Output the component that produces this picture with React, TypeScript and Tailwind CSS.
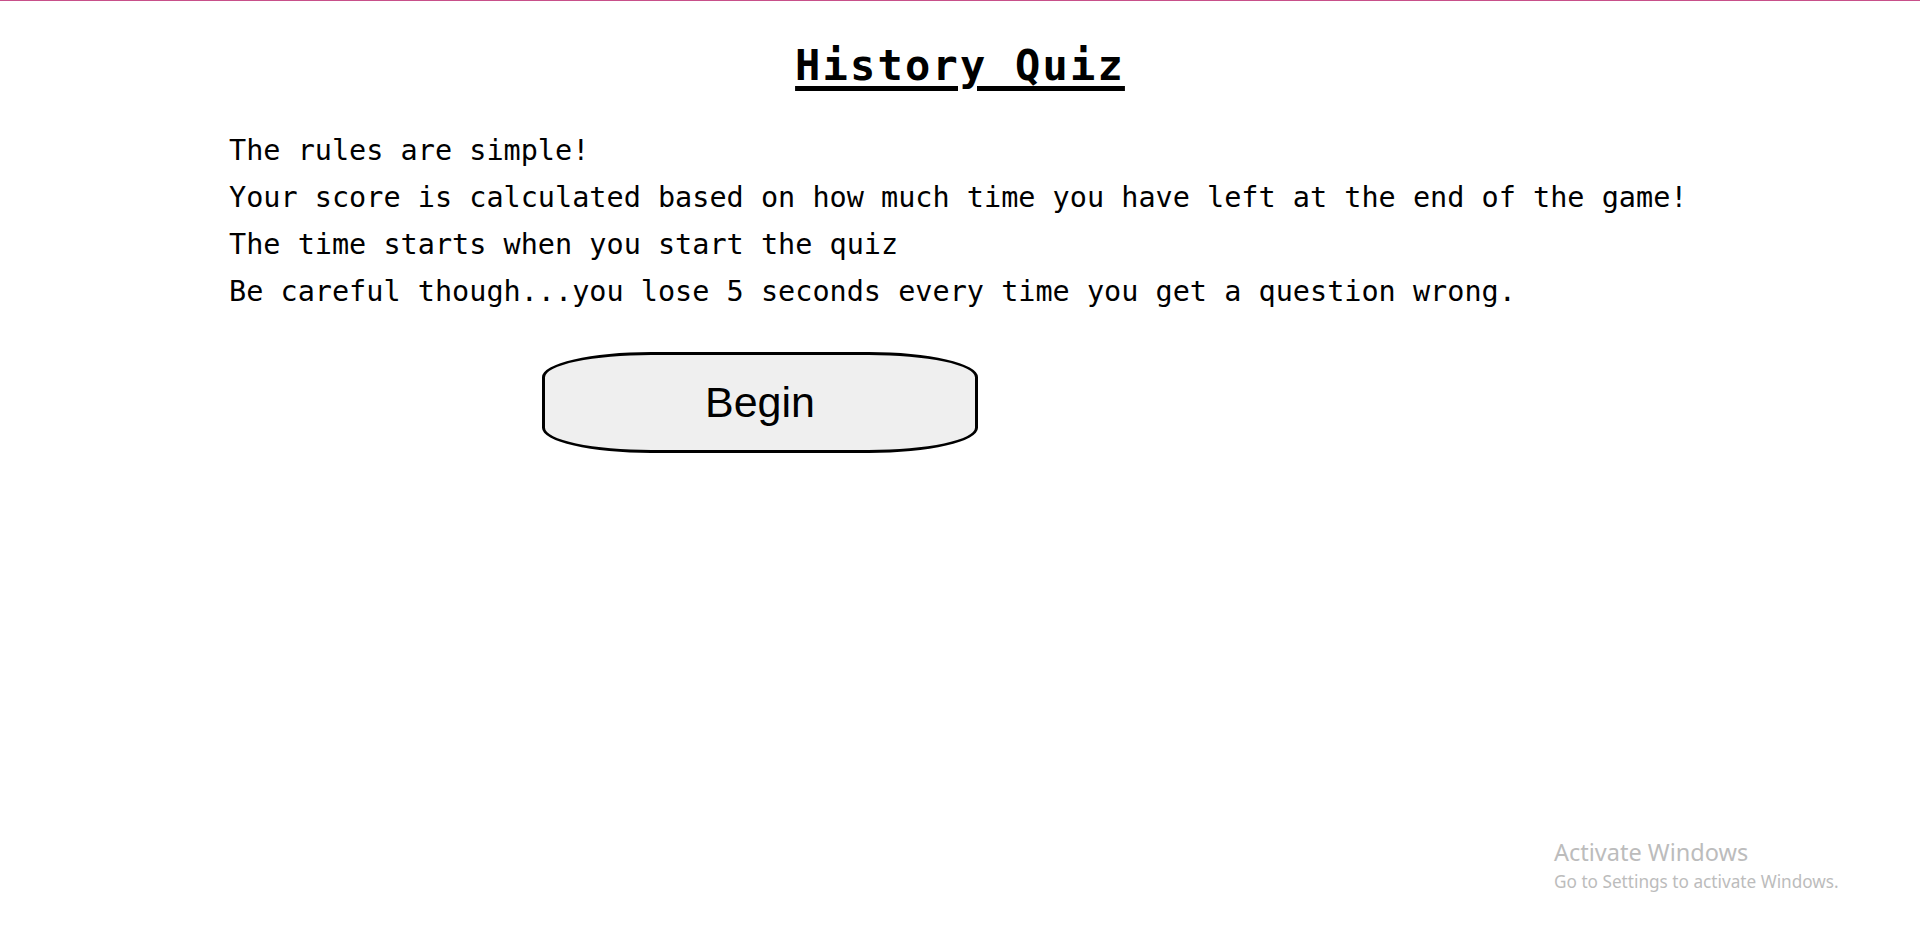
export default function App() {
  const lines = [
    "The rules are simple!",
    "Your score is calculated based on how much time you have left at the end of the game!",
    "The time starts when you start the quiz",
    "Be careful though...you lose 5 seconds every time you get a question wrong.",
  ];
  return (
    <div className="relative min-h-[942px] w-full bg-white border-t border-[#c8508a] text-black">
      <div className="flex flex-col">
        <h1 className="mt-[40px] text-center text-[42px] leading-[50px] font-bold tracking-[2.2px] underline decoration-[5px] underline-offset-[6px] font-['DejaVu_Sans_Mono',monospace]">
          History Quiz
        </h1>
        <div className="mt-[36px] ml-[229px] flex flex-col font-['DejaVu_Sans_Mono',monospace] text-[28.5px] leading-[47px] whitespace-pre">
          {lines.map((l) => (
            <p key={l}>{l}</p>
          ))}
        </div>
        <div className="mt-[37px] ml-[542px]">
          <button className="w-[436px] h-[101px] rounded-[25%] border-[3px] border-black bg-[#efefef] font-['Liberation_Sans',Arial,sans-serif] text-[43px] leading-none text-black">
            Begin
          </button>
        </div>
      </div>
      <div className="absolute left-[1554px] top-[835px] flex flex-col text-[#bcbcbc] font-['Noto_Sans',sans-serif]">
        <span className="text-[23.5px] leading-[32px]">Activate Windows</span>
        <span className="text-[17.2px] leading-[28px]">Go to Settings to activate Windows.</span>
      </div>
    </div>
  );
}
